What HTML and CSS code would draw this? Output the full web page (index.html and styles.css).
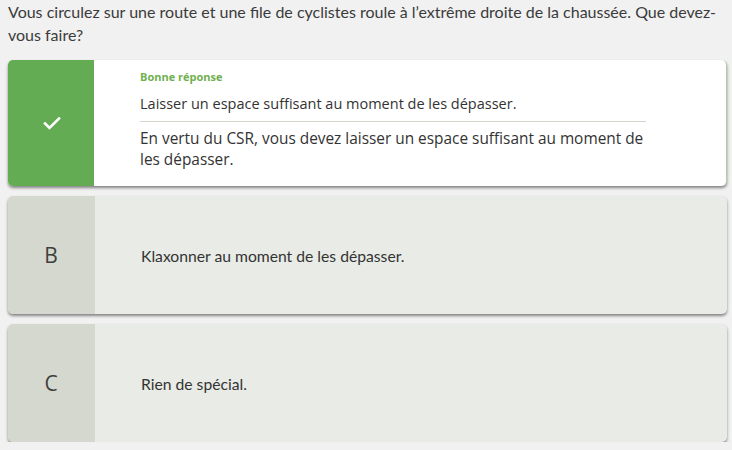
FILE: index.html
```html
<!DOCTYPE html>
<html lang="fr">
<head>
<meta charset="utf-8">
<link rel="stylesheet" href="styles.css">
</head>
<body>
<p class="question">Vous circulez sur une route et une file de cyclistes roule à l’extrême droite de la chaussée. Que devez-vous faire?</p>
<div class="answers">
  <div class="card correct">
    <div class="marker">
      <svg width="18" height="14" viewBox="0 0 18 14"><path d="M2 7.5 L6.5 12 L16 2.5" fill="none" stroke="#fff" stroke-width="2.6" stroke-linecap="square"/></svg>
    </div>
    <div class="body">
      <div class="label">Bonne réponse</div>
      <div class="answer-text">Laisser un espace suffisant au moment de les dépasser.</div>
      <div class="explain">En vertu du CSR, vous devez laisser un espace suffisant au moment de les dépasser.</div>
    </div>
  </div>
  <div class="card">
    <div class="marker letter">B</div>
    <div class="body plain">Klaxonner au moment de les dépasser.</div>
  </div>
  <div class="card">
    <div class="marker letter">C</div>
    <div class="body plain">Rien de spécial.</div>
  </div>
</div>
</body>
</html>
```

FILE: styles.css
```css
html, body {
  margin: 0;
  padding: 0;
  background: #f1f1f1;
}
body {
  padding: 0 5px 0 8px;
  font-family: Lato, "Liberation Sans", sans-serif;
  color: #3a3a3a;
}
.question {
  margin: 0;
  padding-top: 0;
  font-size: 16px;
  line-height: 23px;
  color: #3b3b3b;
  height: 60px;
}
.answers {
  display: flex;
  flex-direction: column;
  gap: 10px;
}
.card {
  display: flex;
  border-radius: 5px;
  overflow: hidden;
  background: #e9ebe6;
  box-shadow: 0 2px 3px rgba(0,0,0,0.45);
  min-height: 118px;
}
.card.correct {
  background: #fff;
  min-height: 126px;
  border-right: 1px solid #a9d29e;
}
.marker {
  width: 86px;
  flex: none;
  background: #d5d8ce;
  display: flex;
  align-items: center;
  justify-content: center;
}
.correct .marker {
  background: #64ac54;
}
.correct .marker svg {
  margin-left: 2px;
}
.letter {
  font-family: "Open Sans", sans-serif;
  font-size: 21px;
  color: #3f3f3f;
  padding-right: 1px;
}
.body {
  padding-left: 46px;
  display: flex;
  flex-direction: column;
  justify-content: center;
}
.body.plain {
  font-size: 15.7px;
  color: #333;
  padding-top: 1px;
}
.correct .body {
  justify-content: flex-start;
  padding-top: 10px;
  font-family: "Open Sans", sans-serif;
  width: 506px;
}
.label {
  font-size: 11px;
  font-weight: 700;
  color: #6fb04f;
  line-height: 14px;
}
.answer-text {
  font-size: 14.5px;
  line-height: 20px;
  color: #333;
  padding: 10px 0 7px;
  border-bottom: 1px solid #d4d4cf;
}
.explain {
  font-size: 15.4px;
  line-height: 21px;
  color: #333;
  padding-top: 6px;
}
```
